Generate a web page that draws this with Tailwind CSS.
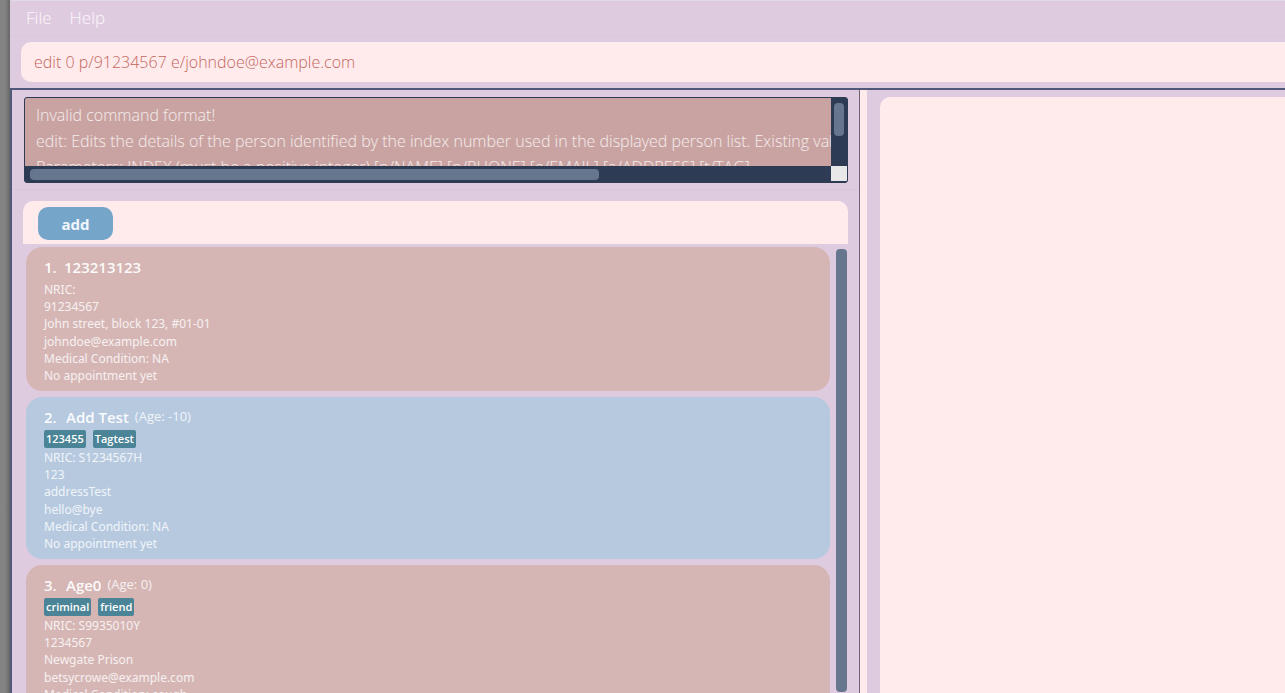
<!DOCTYPE html>
<html lang="en">
<head>
<meta charset="utf-8">
<title>Contacts</title>
<script src="https://cdn.jsdelivr.net/npm/@tailwindcss/browser@4"></script>
</head>
<body class="flex h-screen overflow-hidden bg-[#dfcbdf] font-['Open_Sans','Noto_Sans',sans-serif] text-white">
<div class="w-[10px] shrink-0 bg-linear-to-r from-[#838383] from-50% to-[#666666]"></div>
<div class="flex min-w-0 flex-1 flex-col border-t border-[#e0d8e2]">
  <nav class="flex h-9 shrink-0 items-center gap-[18px] border-b border-[#dbc7d8] px-4 pb-[2px] text-[17px] font-light text-white/85">
    <button type="button">File</button>
    <button type="button">Help</button>
  </nav>
  <form class="shrink-0 pt-[5px] pb-[6px] pl-[11px]">
    <input type="text" aria-label="Command" value="edit 0 p/91234567 e/johndoe@example.com" class="block h-10 w-full rounded-l-[10px] bg-[#ffebec] px-[13px] text-[16px] font-light text-[#c4675e] outline-none">
  </form>
  <main class="flex min-h-0 flex-1 border-t-2 border-l-2 border-[#50597a]">
    <section class="flex w-[848px] shrink-0 flex-col border-r border-[#6c6273]">
      <div class="shrink-0 border-b border-[#dac6d8] pt-[7px] pr-[11px] pb-[6px] pl-3">
        <div class="grid h-[86px] grid-cols-[1fr_16px] grid-rows-[1fr_16px] overflow-hidden rounded-[3px] border border-[#2d3b54] bg-[#2d3b54]">
          <div class="overflow-hidden bg-[#c9a3a2] pt-1 pl-[11px] text-[16px] leading-[26px] font-light whitespace-nowrap text-white/80">
            <p>Invalid command format!</p>
            <p>edit: Edits the details of the person identified by the index number used in the displayed person list. Existing values will be overwritten by the input values.</p>
            <p>Parameters: INDEX (must be a positive integer) [n/NAME] [p/PHONE] [e/EMAIL] [a/ADDRESS] [t/TAG]</p>
          </div>
          <div class="px-[3px] pt-[5px]"><div class="h-[33px] rounded-[4px] bg-[#67768f]"></div></div>
          <div class="py-[3px] pl-[5px]"><div class="h-[11px] w-[71%] rounded-[4px] bg-[#67768f]"></div></div>
          <div class="mb-px bg-[#e8e8e8]"></div>
        </div>
      </div>
      <div class="mt-[11px] mr-[11px] ml-[11px] flex h-[43px] shrink-0 items-center rounded-t-[10px] bg-[#ffebec] px-[15px] pt-[2px]">
        <button type="button" class="h-[33px] w-[75px] rounded-[10px] bg-[#76a5ca] pt-px text-[15px] font-bold text-white/90">add</button>
      </div>
      <div class="flex min-h-0 flex-1 gap-[6px] pt-[3px] pr-3 pl-[14px]">
        <ol class="flex min-w-0 flex-1 flex-col gap-[6px] overflow-hidden font-['Noto_Sans','Open_Sans',sans-serif] text-[12px] text-white/80">
          <li class="shrink-0 rounded-[16px] bg-[#d5b6b5] px-[18px] pt-[9px] pb-[6px]">
            <h2 class="mb-[2px] flex h-[22px] items-center font-['Open_Sans','Noto_Sans',sans-serif] text-[15px] font-semibold text-white/95"><span class="w-[20px]">1.</span><span>123213123</span></h2>
            <ul class="grid h-[105px] grid-rows-6 items-center pt-px">
              <li>NRIC:</li><li>91234567</li><li>John street, block 123, #01-01</li><li>johndoe@example.com</li><li>Medical Condition: NA</li><li>No appointment yet</li>
            </ul>
          </li>
          <li class="shrink-0 rounded-[16px] bg-[#b6c9df] px-[18px] pt-[9px] pb-[6px]">
            <h2 class="mb-[2px] flex h-[22px] items-center font-['Open_Sans','Noto_Sans',sans-serif] text-[15px] font-semibold text-white/95"><span class="w-[22px]">2.</span><span>Add Test</span><span class="pl-[6px] text-[13px] font-normal text-white/80">(Age: -10)</span></h2>
            <div class="flex gap-[7px] font-['Open_Sans','Noto_Sans',sans-serif] text-[11px] leading-[18px] font-semibold text-white"><span class="rounded-[2px] bg-[#4a8496] px-[2px]">123455</span><span class="rounded-[2px] bg-[#4a8496] px-[2px]">Tagtest</span></div>
            <ul class="grid h-[105px] grid-rows-6 items-center pt-px">
              <li>NRIC: S1234567H</li><li>123</li><li>addressTest</li><li>hello@bye</li><li>Medical Condition: NA</li><li>No appointment yet</li>
            </ul>
          </li>
          <li class="shrink-0 rounded-[16px] bg-[#d5b6b5] px-[18px] pt-[9px] pb-[6px]">
            <h2 class="mb-[2px] flex h-[22px] items-center font-['Open_Sans','Noto_Sans',sans-serif] text-[15px] font-semibold text-white/95"><span class="w-[22px]">3.</span><span>Age0</span><span class="pl-[6px] text-[13px] font-normal text-white/80">(Age: 0)</span></h2>
            <div class="flex gap-[7px] font-['Open_Sans','Noto_Sans',sans-serif] text-[11px] leading-[18px] font-semibold text-white"><span class="rounded-[2px] bg-[#4a8496] px-[2px]">criminal</span><span class="rounded-[2px] bg-[#4a8496] px-[2px]">friend</span></div>
            <ul class="grid h-[105px] grid-rows-6 items-center pt-px">
              <li>NRIC: S9935010Y</li><li>1234567</li><li>Newgate Prison</li><li>betsycrowe@example.com</li><li>Medical Condition: cough</li><li>No appointment yet</li>
            </ul>
          </li>
        </ol>
        <div class="mt-[2px] mb-px w-[11px] shrink-0 rounded-[4px] bg-[#67768f]"></div>
      </div>
    </section>
    <div class="w-[7px] shrink-0 bg-[#ffebec]"></div>
    <section class="flex-1 pt-[7px] pl-[13px]" aria-label="Details">
      <div class="h-full rounded-tl-[10px] bg-[#ffebec]"></div>
    </section>
  </main>
</div>
</body>
</html>
